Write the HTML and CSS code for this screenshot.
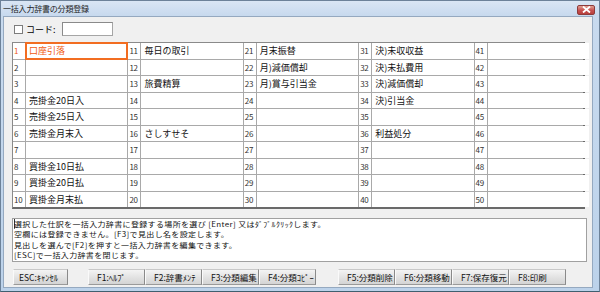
FILE: index.html
```html
<!DOCTYPE html>
<html lang="ja">
<head>
<meta charset="utf-8">
<link rel="stylesheet" href="styles.css">
</head>
<body>
<div class="window">
  <div class="titlebar">
    <span class="title">一括入力辞書の分類登録</span>
    <span class="close"><svg width="9" height="7" viewBox="0 0 9 7"><path d="M1 0.5 L8 6.5 M8 0.5 L1 6.5" stroke="#fff" stroke-width="1.8"/></svg></span>
  </div>
  <div class="client">
    <div class="code-row">
      <span class="check"></span>
      <span class="code-label">コード:</span>
      <span class="code-input"></span>
    </div>
    <div class="table">
      <div class="grid" id="grid"></div>
    </div>
    <div class="message">
      <div class="line"><span class="caret">選</span>択した仕訳を一括入力辞書に登録する場所を選び [Enter] 又はﾀﾞﾌﾞﾙｸﾘｯｸします。</div>
      <div class="line">空欄には登録できません。[F3]で見出し名を設定します。</div>
      <div class="line">見出しを選んで[F2]を押すと一括入力辞書を編集できます。</div>
      <div class="line">[ESC]で一括入力辞書を閉じます。</div>
    </div>
    <div class="buttons">
      <span class="btn esc">ESC:ｷｬﾝｾﾙ</span>
      <div class="btn-group g1">
        <span class="btn">F1:ﾍﾙﾌﾟ</span>
        <span class="btn">F2:辞書ﾒﾝﾃ</span>
        <span class="btn">F3:分類編集</span>
        <span class="btn">F4:分類ｺﾋﾟｰ</span>
      </div>
      <div class="btn-group g2">
        <span class="btn">F5:分類削除</span>
        <span class="btn">F6:分類移動</span>
        <span class="btn">F7:保存復元</span>
        <span class="btn">F8:印刷</span>
      </div>
    </div>
  </div>
</div>
<script src="script.js"></script>
</body>
</html>
```
FILE: script.js
```js
const names = {
  1: "口座引落", 4: "売掛金20日入", 5: "売掛金25日入", 6: "売掛金月末入",
  8: "買掛金10日払", 9: "買掛金20日払", 10: "買掛金月末払",
  11: "毎日の取引", 13: "旅費精算", 16: "さしすせそ",
  21: "月末振替", 22: "月)減価償却", 23: "月)賞与引当金",
  31: "決)未収収益", 32: "決)未払費用", 33: "決)減価償却", 34: "決)引当金", 36: "利益処分"
};
const grid = document.getElementById("grid");
for (let r = 1; r <= 10; r++) {
  for (let c = 0; c < 5; c++) {
    const n = r + c * 10;
    const num = document.createElement("div");
    num.className = "num" + (n === 1 ? " sel-num" : "");
    num.textContent = n;
    const nm = document.createElement("div");
    nm.className = "name" + (n === 1 ? " sel" : "");
    nm.textContent = names[n] || "";
    grid.appendChild(num);
    grid.appendChild(nm);
  }
}
```
FILE: styles.css
```css
html, body {
  margin: 0;
  padding: 0;
}
body {
  width: 600px;
  height: 292px;
  overflow: hidden;
  font-family: "Noto Sans CJK JP", "Noto Sans", sans-serif;
  font-size: 9px;
  color: #000;
}
.window {
  width: 600px;
  height: 292px;
  box-sizing: border-box;
  background: linear-gradient(#c9dbef, #bcd2ea);
  border: 1px solid #6d8299;
  border-bottom-color: #3f5f6f;
  display: flex;
  flex-direction: column;
}
.titlebar {
  height: 15px;
  display: flex;
  align-items: center;
  justify-content: space-between;
  padding: 0 4px 0 2px;
  background: linear-gradient(#dae6f4, #c7d9ee);
}
.title {
  font-size: 8px;
  color: #1e1e1e;
  letter-spacing: -0.2px;
}
.close {
  width: 18px;
  height: 10px;
  margin-top: 2px;
  border: 1px solid #8d3b3b;
  border-radius: 2px;
  background: linear-gradient(#e2a092, #c75050 55%, #b8403c);
  display: flex;
  align-items: center;
  justify-content: center;
  box-sizing: border-box;
}
.client {
  margin: 0 6px 3px 2px;
  flex: 1;
  background: #f0f0f0;
  border: 1px solid #95a9c0;
  display: flex;
  flex-direction: column;
  padding: 5px 0 0 8px;
}
.code-row {
  height: 14px;
  display: flex;
  align-items: center;
}
.check {
  width: 7px;
  height: 7px;
  border: 1px solid #7d7d7d;
  background: #fff;
  margin-left: 2px;
}
.code-label {
  margin-left: 3px;
  font-size: 9px;
  width: 36px;
}
.code-input {
  width: 49px;
  height: 12px;
  background: #fff;
  border: 1px solid #a5a5a5;
  border-top-color: #8a8a8a;
  border-left-color: #8a8a8a;
}
.table {
  margin-top: 6px;
  width: 573px;
  height: 167px;
  box-sizing: border-box;
  border: 1px solid #8a8a8a;
  border-right: 2px solid #6a6a6a;
  border-bottom: 2px solid #6a6a6a;
  background: #a9a9a9;
}
.grid {
  display: grid;
  grid-template-columns: repeat(5, 12px 101.4px);
  grid-template-rows: repeat(10, 1fr);
  gap: 1px;
  height: 100%;
}
.num, .name {
  background: #fff;
  display: flex;
  align-items: center;
  white-space: nowrap;
  overflow: hidden;
}
.num {
  padding-left: 1px;
  font-size: 8px;
  color: #333;
  letter-spacing: -0.3px;
}
.name {
  padding-left: 3px;
  font-size: 9px;
  color: #111;
}
.sel {
  outline: 2px solid #f26d21;
  outline-offset: -1px;
  color: #f05a10;
  position: relative;
}
.sel-num {
  color: #f05a10;
}
.message {
  margin-top: 9px;
  width: 575px;
  height: 44px;
  box-sizing: border-box;
  background: #fff;
  border: 1px solid #a0a0a0;
  padding: 0 0 0 1px;
  font-size: 8px;
  letter-spacing: 0.35px;
  color: #111;
  white-space: nowrap;
  overflow: hidden;
}
.line {
  height: 10.4px;
  line-height: 11.6px;
  transform: scaleY(0.88);
  transform-origin: 0 0;
}
.caret {
  box-shadow: inset 1px 0 0 #333;
}
.buttons {
  margin-top: 7px;
  height: 16px;
  display: flex;
  align-items: stretch;
}
.btn-group {
  display: flex;
}
.g1 {
  margin-left: 20px;
}
.g2 {
  margin-left: 22px;
}
.btn {
  width: 57px;
  box-sizing: border-box;
  display: flex;
  align-items: center;
  padding-left: 8px;
  font-size: 8.5px;
  color: #111;
  background: linear-gradient(#f4f4f4, #e3e3e3 50%, #d4d4d4);
  border: 1px solid #c8c8c8;
  border-left-color: #fafafa;
  border-right-color: #8a8a8a;
  border-bottom-color: #9a9a9a;
  white-space: nowrap;
}
.esc {
  width: 55px;
  margin-left: 1px;
  padding-left: 5px;
}
```
